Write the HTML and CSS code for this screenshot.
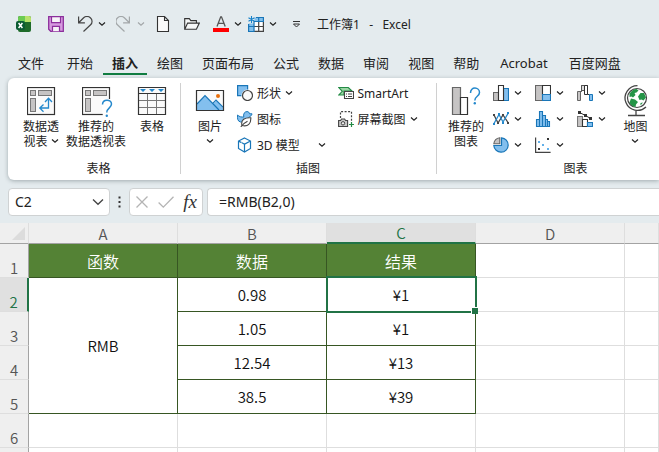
FILE: index.html
```html
<!DOCTYPE html>
<html lang="zh-CN">
<head>
<meta charset="utf-8">
<title>工作簿1 - Excel</title>
<link rel="stylesheet" href="styles.css">
</head>
<body>
<svg class="defs" aria-hidden="true">
  <symbol id="chev" viewBox="0 0 8 6"><path d="M1 1.500l3 2.700 3-2.700" fill="none" stroke="currentColor" stroke-width="1.200"/></symbol>
  <symbol id="pivot" viewBox="0 0 30 30"><rect x=".5" y=".5" width="27" height="27" fill="#fafafa" stroke="#333" stroke-width="1.200"/><g fill="#c6c4c4" stroke="#777" stroke-width="1"><rect x="3.500" y="3.500" width="5" height="5"/><rect x="11.500" y="3.500" width="13" height="5"/><rect x="3.500" y="11.500" width="5" height="13"/></g></symbol>
</svg>

<header class="titlebar">
  <svg class="i16" viewBox="0 0 16 16"><rect x="2" width="13" height="16" rx="2" fill="#1e6b2a"/><path d="M4 0h5v6H2V2a2 2 0 0 1 2-2z" fill="#6ccb53"/><path d="M9 0h4a2 2 0 0 1 2 2v4H9z" fill="#b9e26b"/><path d="M2 6h7v4H2z" fill="#3d9c3b"/><rect y="5" width="9" height="9" rx="2" fill="#0b5c33"/><path d="M2.600 7l3.800 5M6.400 7l-3.800 5" stroke="#fff" stroke-width="1.500"/></svg>
  <button class="tool" aria-label="保存"><svg class="i16" viewBox="0 0 16 16"><path d="M.7.7h14.600v14.600H2.700l-2-2z" fill="#d69adf" stroke="#8c2f9c" stroke-width="1.300"/><path d="M3.500.7h9v6h-9zM4.500 15.300v-5h7v5" fill="#f7f3f8" stroke="#8c2f9c" stroke-width="1.200"/></svg></button>
  <button class="tool" aria-label="撤消"><svg class="i16" viewBox="0 0 16 16"><path d="M1.600.5v6.300h6.300M1.900 6.500L6.400 2a5 5 0 0 1 7.200 0 4.700 4.700 0 0 1 0 6.800L6.500 15.500" fill="none" stroke="#444" stroke-width="1.200"/></svg><svg class="chev"><use href="#chev"/></svg></button>
  <button class="tool faded" aria-label="恢复"><svg class="i16" viewBox="0 0 16 16"><path d="M13.400.5v6.300H7.100M13.100 6.500L8.600 2a5 5 0 0 0-7.200 0 4.700 4.700 0 0 0 0 6.800L8.500 15.500" fill="none" stroke="#a3a7a9" stroke-width="1.200"/></svg><svg class="chev"><use href="#chev"/></svg></button>
  <button class="tool" aria-label="新建"><svg class="i16" viewBox="0 0 16 16"><path d="M1.500.500h7l4 4v11h-11zM8.500.500v4h4" fill="#fafafa" stroke="#333" stroke-width="1.100"/></svg></button>
  <button class="tool" aria-label="打开"><svg class="i16" viewBox="0 0 16 16"><path d="M.7 13.200V2.600h4.600l1.500 2h5.600v2.500M.8 13.300l2.800-6.200h11.700l-2.900 6.200z" fill="#f6f8f8" stroke="#333" stroke-width="1.100"/></svg></button>
  <button class="tool" aria-label="字体颜色"><svg class="i16" viewBox="0 0 16 16"><path d="M4 10.500L7.700.8h.8l3.700 9.700M5.300 7.300h5.600" fill="none" stroke="#555" stroke-width="1.300"/><path d="M0 12h16v4H0z" fill="#f00"/></svg><svg class="chev"><use href="#chev"/></svg></button>
  <button class="tool" aria-label="冻结窗格"><svg class="i16" viewBox="0 0 16 16"><path d="M6.500 1.500h9v4h-9z" fill="#83c0ec"/><path d="M.6 7.500h5.400v8H.6z" fill="#83c0ec"/><path d="M6.500 5.500h9v10h-9z" fill="#fff"/><path d="M6 15.400h9.400V5.500M6 10.500h9.400M10.700 6v9.500" fill="none" stroke="#444" stroke-width="1.200"/><path d="M8 1.500h7.400v4H6v10H.6V8M.6 10.500H6M10.700 1.500v4" fill="none" stroke="#1976b8" stroke-width="1.200"/><path d="M3.500 0v7M.5 1.700l6 3.600M6.500 1.700l-6 3.600" stroke="#1681c9" stroke-width="1.100"/></svg><svg class="chev"><use href="#chev"/></svg></button>
  <button class="tool" aria-label="自定义快速访问工具栏"><svg class="i10" viewBox="0 0 10 10"><path d="M1 2.500h7M1.500 5l3 3 3-3z" fill="none" stroke="#333"/></svg></button>
  <h1 class="doc">工作簿1&nbsp;&nbsp; -&nbsp;&nbsp; Excel</h1>
</header>

<nav class="tabs">
  <a class="file" href="#">文件</a><a href="#">开始</a><a class="active" href="#" aria-current="page">插入</a><a href="#">绘图</a><a href="#">页面布局</a><a href="#">公式</a><a href="#">数据</a><a href="#">审阅</a><a href="#">视图</a><a href="#">帮助</a><a class="addin" href="#">Acrobat</a><a href="#">百度网盘</a>
</nav>

<section class="ribbon">
  <div class="group tables">
    <div class="tools">
      <button class="big"><svg class="i30" viewBox="0 0 30 30"><use href="#pivot" width="30" height="30"/><path d="M21.500 11.500v9.500h-8M18 15l3.500-3.700L25 15M16.500 17.500L12.800 21l3.700 3.700" fill="none" stroke="#2488cc" stroke-width="1.300"/></svg><span>数据透<br>视表 <svg class="chev"><use href="#chev"/></svg></span></button>
      <button class="big wide"><svg class="i30" viewBox="0 0 30 30"><use href="#pivot" width="30" height="30"/><path d="M19 12h11v18h-9z" fill="#fff"/><path d="M20.500 17.500c0-6 9-5.500 9-.5 0 4-4.700 3.700-4.700 8.500" fill="none" stroke="#2488cc" stroke-width="1.500"/><circle cx="24.800" cy="28.800" r="1.200" fill="#2488cc"/></svg><span>推荐的<br>数据透视表</span></button>
      <button class="big"><svg class="i30" viewBox="0 0 30 30"><path d="M.5.5h27v27H.5z" fill="#fafafa"/><path d="M1 13.500h26M1 20.500h26M9.500 7v20M18.500 7v20" stroke="#777"/><path d="M.5.5h27v27H.5zM.5 6.500h27" fill="none" stroke="#333" stroke-width="1.200"/><path d="M2 2h6L5 5zM11 2h6l-3 3zM20 2h6l-3 3z" fill="#2488cc"/></svg><span>表格</span></button>
    </div>
    <h2>表格</h2>
  </div>
  <div class="group art">
    <div class="tools">
      <button class="big"><svg class="i30" viewBox="0 0 30 30"><path d="M.5 3.500h27v20H.5z" fill="#fafafa"/><path d="M1 17l8-8.500 8 8.500 3.500-3.500 6.500 7v2.500H1z" fill="#83bfee"/><path d="M1 17l8-8.500L23 23M16.500 16.700l3.500-3.500 7 7" fill="none" stroke="#1976b8" stroke-width="1.200"/><path d="M.5 3.500h27v20H.5z" fill="none" stroke="#333" stroke-width="1.200"/><circle cx="22" cy="9" r="2" fill="#e8700d"/></svg><span>图片<br><svg class="chev"><use href="#chev"/></svg></span></button>
      <div class="stack">
        <button class="small"><svg class="i16" viewBox="0 0 16 16"><path d="M.6.6h10v10H.6z" fill="#83bfee" stroke="#1976b8" stroke-width="1.200"/><circle cx="10.500" cy="10.500" r="6" fill="#fff"/><circle cx="10.500" cy="10.500" r="5" fill="#fafafa" stroke="#444" stroke-width="1.200"/></svg>形状 <svg class="chev"><use href="#chev"/></svg></button>
        <button class="small"><svg class="i16" viewBox="0 0 16 16"><path d="M.6 4c1.500 1.800 4 2.200 6.200 2C6 3 7.500.6 10 .6c1.500 0 2.300.8 2.500 2.200H15c-.3 1.700-1.200 2.400-2.400 2.700C11.500 7.500 8 8 6.500 10c-1 1-2 1.200-3 1C.6 10.500.1 7 .6 4z" fill="#83bfee" stroke="#1976b8"/><path d="M5 14.500C3.500 8.500 8 6.500 13.800 6.800c.4 6-2.800 9.200-8.800 7.700z" fill="#fff" stroke="#444" stroke-width="1.100"/><path d="M3.800 16c1.500-2.500 3.700-4.200 6.700-5.700" fill="none" stroke="#444" stroke-width="1.100"/></svg>图标</button>
        <button class="small"><svg class="i16" viewBox="0 0 16 16"><path d="M7.500 1l6 3v7.500l-6 3.500-6-3.500V4zM1.500 4l3 1.600M13.500 4l-6 3.200v7.300M5 5.800l2.500 1.400" fill="none" stroke="#1976b8" stroke-width="1.200"/></svg>3D 模型<svg class="chev split"><use href="#chev"/></svg></button>
      </div>
      <div class="stack">
        <button class="small"><svg class="i16" viewBox="0 0 16 16"><path d="M.8 2.500h9.500L14 6H6v4H.8l3.500-3.700z" fill="#9bd6a5" stroke="#238b45" stroke-width="1.100"/><path d="M6.500 6.500h9v7h-9z" fill="#fff" stroke="#444" stroke-width="1.100"/><path d="M8 9h1M10 9h4M8 11.500h1M10 11.500h4" stroke="#444"/></svg>SmartArt</button>
        <button class="small"><svg class="i16" viewBox="0 0 16 16"><path d="M2.500 7V.6h11v10" fill="none" stroke="#444" stroke-width="1.200" stroke-dasharray="2 1.500"/><path d="M.6 9.500h2l1-1.500h3l1 1.500h2v6h-9z" fill="#c8c8c8" stroke="#444" stroke-width="1.100"/><circle cx="5" cy="12.300" r="1.700" fill="#eee" stroke="#444"/><path d="M11 13.500h5M13.500 11v5" stroke="#238b45" stroke-width="1.200"/></svg>屏幕截图 <svg class="chev"><use href="#chev"/></svg></button>
      </div>
    </div>
    <h2>插图</h2>
  </div>
  <div class="group charts">
    <div class="tools">
      <button class="big"><svg class="i30" viewBox="0 0 30 30"><path d="M.5.5h8v27h-8z" fill="#c6c4c4" stroke="#666" stroke-width="1.200"/><path d="M8.500 10.500h7v17h-7z" fill="#fff" stroke="#333" stroke-width="1.200"/><path d="M18.500 6c0-7 9-6 9-.5 0 4-4.700 3.500-4.700 8" fill="none" stroke="#2488cc" stroke-width="1.500"/><circle cx="22.800" cy="16.300" r="1.200" fill="#2488cc"/></svg><span>推荐的<br>图表</span></button>
      <div class="gallery">
        <button class="mini" aria-label="柱形图"><svg class="i16" viewBox="0 0 16 16"><path d="M.5 7.500h5v8h-5z" fill="#c6c4c4" stroke="#666" stroke-width="1.100"/><path d="M10.500 3.500h5v12h-5z" fill="#83bfee" stroke="#1976b8" stroke-width="1.100"/><path d="M5.500.5h5v15h-5z" fill="#fff" stroke="#333" stroke-width="1.100"/></svg><svg class="chev"><use href="#chev"/></svg></button>
        <button class="mini" aria-label="层次结构图"><svg class="i16" viewBox="0 0 16 16"><path d="M.5.5h7v15h-7z" fill="#c6c4c4" stroke="#666" stroke-width="1.100"/><path d="M7.500.5h8v9h-8z" fill="#fff" stroke="#333" stroke-width="1.100"/><path d="M7.500 9.500h8v6h-8z" fill="#83bfee" stroke="#1976b8" stroke-width="1.100"/></svg><svg class="chev"><use href="#chev"/></svg></button>
        <button class="mini" aria-label="瀑布图"><svg class="i16" viewBox="0 0 16 16"><path d="M.5 6.500h3v9h-3z" fill="#c6c4c4" stroke="#666"/><path d="M3.500 6.500h1V.5h6v9h2" fill="none" stroke="#333"/><path d="M4.500.5h3v5h-3z" fill="#ddd" stroke="#555"/><path d="M7.500.5h3v9h-3z" fill="#fff" stroke="#333"/><path d="M12.500 9.500h3v6h-3z" fill="#83bfee" stroke="#1976b8"/></svg><svg class="chev"><use href="#chev"/></svg></button>
        <button class="mini" aria-label="折线图"><svg class="i16" viewBox="0 0 16 16"><path d="M1 4l4 8 5-8 5 7.500" fill="none" stroke="#444" stroke-width="1.300"/><path d="M1 12.500l5-9 4 7.500 5-8.500" fill="none" stroke="#2488cc" stroke-width="1.300"/><g fill="#2488cc"><path d="M0 12h2v2H0zM5 2h2v2H5zM9 11h2v2H9zM14 1h2v2h-2z"/></g><g fill="#444"><path d="M0 3h2v2H0zM4 11h2v2H4zM9 3h2v2H9zM14 11h2v2h-2z"/></g></svg><svg class="chev"><use href="#chev"/></svg></button>
        <button class="mini" aria-label="统计图"><svg class="i16" viewBox="0 0 16 16"><path d="M1.500 8.500h3v7h-3zM4.500.5h3v15h-3zM7.500 4.500h3v11h-3zM10.500 8.500h2v7h-2zM12.500 10.500h2v5h-2z" fill="#83bfee" stroke="#1976b8" stroke-width="1.100"/></svg><svg class="chev"><use href="#chev"/></svg></button>
        <button class="mini" aria-label="组合图"><svg class="i16" viewBox="0 0 16 16"><path d="M.5 5.500h5v10h-5z" fill="#c6c4c4" stroke="#777" stroke-width="1.100"/><path d="M5.500 8.500h5v7h-5z" fill="#fff" stroke="#333" stroke-width="1.100"/><path d="M10.500 11.500h5v4h-5z" fill="#83bfee" stroke="#1976b8" stroke-width="1.100"/><path d="M2.500 1.500l6 3 5 3" fill="none" stroke="#333"/><path d="M1 0h3v3H1zM7 3h3v3H7zM12 6h3v3h-3z" fill="#333"/></svg><svg class="chev"><use href="#chev"/></svg></button>
        <button class="mini" aria-label="饼图"><svg class="i16" viewBox="0 0 16 16"><path d="M8.500.8a7.200 7.200 0 1 1-7.700 7.700h7.700z" fill="#83bfee" stroke="#1976b8" stroke-width="1.200"/><path d="M6.800 6.800V.8A7 7 0 0 0 .8 6.800z" fill="#c6c4c4" stroke="#666" stroke-width="1.100"/></svg><svg class="chev"><use href="#chev"/></svg></button>
        <button class="mini" aria-label="散点图"><svg class="i16" viewBox="0 0 16 16"><path d="M.6.5v14.900h15" fill="none" stroke="#444" stroke-width="1.200"/><path d="M3 4h2v2H3zM7 7h2v2H7zM12 11h2v2h-2z" fill="#62b0ea"/><path d="M12 1h2v2h-2zM3 11h2v2H3z" fill="#333"/></svg><svg class="chev"><use href="#chev"/></svg></button>
      </div>
      <button class="big map"><svg class="i30" viewBox="0 0 30 30"><circle cx="15" cy="11" r="9.500" fill="#fff" stroke="#444" stroke-width="1.200"/><path d="M7.500 7c1.500-3 4-5 7-5l2 1.500-2 2-2 .5 1 2-2.500 2.500-1.500-1-2 .500zM16 9.500l2.500-3.500 3.500 0 2 4.500-2.500 3-2-1-2 .500zM9 11.500l4 1 3 2.500-2 2.500-.5 2.500c-3-.500-5-2-6-4.500zM18.500 16l2.500-.500-2.500 3z" fill="#249447"/><path d="M15.500-1.400A12.400 12.400 0 1 0 24 20M14 24v4M6 28.500h17" fill="none" stroke="#444" stroke-width="1.300"/></svg><span>地图<br><svg class="chev"><use href="#chev"/></svg></span></button>
    </div>
    <h2>图表</h2>
  </div>
</section>

<section class="formula-bar">
  <label class="namebox"><input type="text" value="C2" aria-label="名称框"><svg class="drop" viewBox="0 0 12 8"><path d="M1 1.500l5 4.800 5-4.800" fill="none" stroke="#444" stroke-width="1.300"/></svg></label>
  <svg class="dots" viewBox="0 0 3 12"><path d="M.5.5h2v2h-2zM.5 5h2v2h-2zM.5 9.500h2v2h-2z" fill="#333"/></svg>
  <div class="actions">
    <button aria-label="取消"><svg viewBox="0 0 16 16"><path d="M2.500 2.500l11 11M13.500 2.500l-11 11" stroke="#b4b4b4" stroke-width="1.300"/></svg></button>
    <button aria-label="输入"><svg viewBox="0 0 16 16"><path d="M.6 8.500l4.700 4.700L15.500 2.800" fill="none" stroke="#b4b4b4" stroke-width="1.300"/></svg></button>
    <button class="fx" aria-label="插入函数">fx</button>
  </div>
  <input class="formula" type="text" value="=RMB(B2,0)" aria-label="编辑栏">
</section>

<main class="sheet">
  <table>
    <colgroup><col class="c-num"><col class="c"><col class="c"><col class="c"><col class="c"><col></colgroup>
    <thead>
      <tr><th class="corner"><svg viewBox="0 0 13 13"><path d="M13 0v13H0z" fill="#dcdcdc"/></svg></th><th>A</th><th>B</th><th class="picked">C</th><th>D</th><th></th></tr>
    </thead>
    <tbody>
      <tr><th>1</th><td class="head">函数</td><td class="head">数据</td><td class="head">结果</td><td></td><td></td></tr>
      <tr><th class="picked">2</th><td class="data" rowspan="4">RMB</td><td class="data">0.98</td><td class="data cursor">¥1</td><td></td><td></td></tr>
      <tr><th>3</th><td class="data">1.05</td><td class="data">¥1</td><td></td><td></td></tr>
      <tr><th>4</th><td class="data">12.54</td><td class="data">¥13</td><td></td><td></td></tr>
      <tr><th>5</th><td class="data">38.5</td><td class="data">¥39</td><td></td><td></td></tr>
      <tr><th>6</th><td></td><td></td><td></td><td></td><td></td></tr>
      <tr><th></th><td></td><td></td><td></td><td></td><td></td></tr>
    </tbody>
  </table>
</main>
</body>
</html>
```
FILE: styles.css
```css
* { box-sizing: border-box; }

body {
  margin: 0;
  height: 100vh;
  display: flex;
  flex-direction: column;
  overflow: hidden;
  background: #e4ebee;
  color: #222;
  font: 12px/15px "Noto Sans", "Noto Sans CJK SC", sans-serif;
}

button {
  margin: 0;
  padding: 0;
  border: 0;
  background: none;
  color: inherit;
  font: inherit;
}

h1, h2 { margin: 0; font: inherit; }
svg { flex: none; display: block; }
.defs { position: absolute; width: 0; height: 0; }
.i16 { width: 16px; height: 16px; }
.i30 { width: 30px; height: 30px; overflow: visible; }
.i10 { width: 10px; height: 10px; }
.chev { width: 8px; height: 6px; }

/* Title bar */
.titlebar {
  display: grid;
  grid-template-columns: 32px 29px 39px 40px 28px 29px 35px 44px 25px auto;
  align-items: center;
  flex: none;
  height: 48px;
  padding-left: 16px;
}
.tool { display: flex; align-items: center; gap: 5px; }
.faded { color: #a3a7a9; }

/* Tabs */
.tabs {
  display: flex;
  flex: none;
  gap: 19px;
  height: 30px;
  padding-left: 18px;
  font-size: 13px;
  line-height: 30px;
  white-space: nowrap;
}
.tabs a { position: relative; color: #222; text-decoration: none; }
.tabs .file { margin-right: 4px; }
.tabs .addin { margin: 0 2px; }
.tabs .active { font-weight: 700; }
.tabs .active::after {
  content: "";
  position: absolute;
  left: -9px;
  right: -9px;
  bottom: 3px;
  height: 2px;
  background: #107c41;
}

/* Ribbon */
.ribbon {
  display: flex;
  flex: none;
  height: 102px;
  margin-left: 8px;
  background: #fff;
  border-radius: 6px 0 0 6px;
  box-shadow: 0 1px 4px rgba(60, 75, 80, .4);
}
.group {
  position: relative;
  display: flex;
  flex: none;
  flex-direction: column;
  justify-content: space-between;
  padding: 2px 0 4px;
}
.group + .group::before {
  content: "";
  position: absolute;
  left: 0;
  top: 5px;
  bottom: 6px;
  width: 1px;
  background: #d0d0d0;
}
.group h2 { text-align: center; }
.tables { width: 172px; padding-left: 9px; }
.art { width: 256px; }
.group.charts { flex: 1; min-width: 0; }
.charts h2 { padding-left: 56px; }
.art .tools, .charts .tools { padding-left: 5px; }
.tools { display: flex; }
.big {
  display: flex;
  flex: none;
  flex-direction: column;
  align-items: center;
  gap: 2px;
  width: 50px;
  padding-top: 7px;
  white-space: nowrap;
}
.big .i30 { margin-left: 2px; }
.big .chev { display: inline-block; vertical-align: 2px; }
.tables .big:first-child { width: 48px; }
.tables .wide { width: 62px; }
.charts .map { width: 47px; }
.stack { display: flex; flex-direction: column; width: 105px; padding-left: 2px; }
.small {
  display: flex;
  align-items: center;
  gap: 4px;
  height: 26px;
  white-space: nowrap;
}
.small .split { margin-left: 14px; }
.gallery {
  display: grid;
  grid-template-columns: repeat(3, 42px);
  grid-auto-rows: 26px;
  width: 119px;
  margin-left: 2px;
}
.mini { display: flex; align-items: center; gap: 5px; }

/* Formula bar */
.formula-bar {
  display: flex;
  flex: none;
  align-items: center;
  height: 43px;
  padding-left: 8px;
}
.namebox, .actions, .formula {
  height: 28px;
  border: 1px solid #cfd2d3;
  border-radius: 4px;
  background: #fff;
}
.namebox { display: flex; align-items: center; width: 102px; padding: 0 5px 0 6px; }
.formula-bar input {
  min-width: 0;
  color: #222;
  font: 14px/20px "Noto Sans", "Noto Sans CJK SC", sans-serif;
}
.namebox input { flex: 1; padding: 0; border: 0; background: none; }
.drop { width: 12px; height: 8px; }
.dots { width: 3px; height: 12px; margin: 0 8px; }
.actions { display: flex; align-items: center; gap: 8px; width: 74px; padding: 0 3px 0 4px; }
.actions button { flex: none; width: 16px; }
.actions .fx { font: italic 19px/18px "Liberation Serif", serif; color: #333; }
.formula {
  flex: 1;
  margin-left: 4px;
  padding: 0 11px;
  border-right: 0;
  border-radius: 4px 0 0 4px;
}

/* Worksheet */
.sheet { flex: 1; min-height: 0; overflow: hidden; background: #fff; }
table {
  width: 100%;
  table-layout: fixed;
  border-collapse: separate;
  border-spacing: 0;
  font: 350 15px/18px "Noto Sans CJK SC", sans-serif;
}
.c-num { width: 29px; }
.c { width: 149px; }
th, td {
  height: 34px;
  padding: 0;
  border: 0 solid #dedede;
  border-width: 0 1px 1px 0;
  text-align: center;
}
th { background: #efefef; color: #555; font-weight: 350; }
thead th { height: 21px; line-height: 19px; border-bottom-color: #a3a3a3; }
tbody th { vertical-align: bottom; border-right-color: #a3a3a3; }
.corner svg { width: 13px; height: 13px; margin-left: 12px; }
.picked { background: #e0e0e0; color: #217346; }
thead .picked { border-bottom: 2px solid #217346; }
tbody .picked { border-right: 2px solid #217346; }
.head { background: #548235; border-color: #375623; color: #fff; font-size: 16px; }
.data { border-color: #375623; color: #111; }
.cursor { position: relative; }
.cursor::before {
  content: "";
  position: absolute;
  inset: -2px -2px -2px -1px;
  border: 2px solid #217346;
}
.cursor::after {
  content: "";
  position: absolute;
  right: -3px;
  bottom: -3px;
  width: 6px;
  height: 6px;
  border: 1px solid #fff;
  border-width: 1px 0 0 1px;
  background: #217346;
}
```
